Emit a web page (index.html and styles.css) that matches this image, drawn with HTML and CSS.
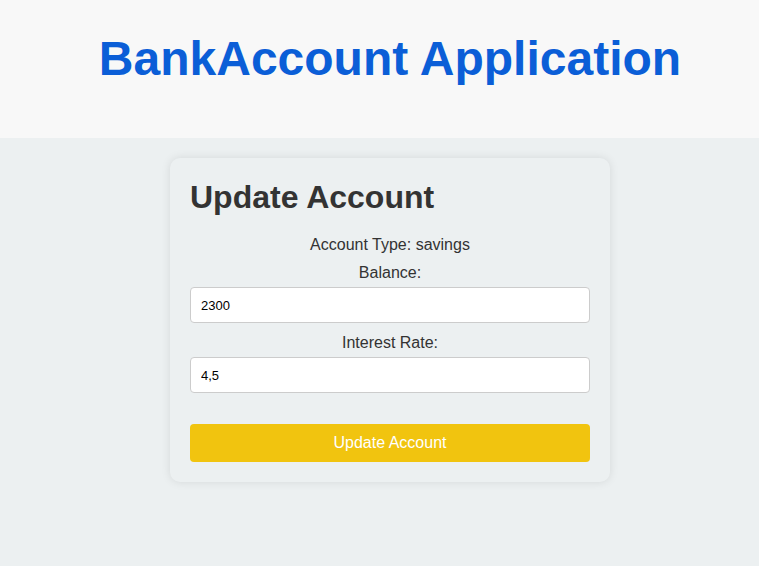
FILE: index.html
```html
<!DOCTYPE html>
<html>
<head>
<meta charset="utf-8">
<link rel="stylesheet" href="styles.css">
</head>
<body>
<header class="header">
  <h1 class="title">BankAccount Application</h1>
</header>
<main class="main">
  <section class="card">
    <h2 class="card-title">Update Account</h2>
    <p class="type">Account Type: savings</p>
    <label class="label" for="bal">Balance:</label>
    <input class="field" id="bal" type="text" value="2300">
    <label class="label" for="rate">Interest Rate:</label>
    <input class="field" id="rate" type="text" value="4,5">
    <button class="btn">Update Account</button>
  </section>
</main>
</body>
</html>
```
FILE: styles.css
```css
html, body {
  margin: 0;
  padding: 0;
}
body {
  background: #ecf0f1;
  font-family: "Liberation Sans", Arial, sans-serif;
  color: #333;
  height: 566px;
  overflow: hidden;
}
.header {
  background: #f8f8f8;
  height: 138px;
  padding-left: 21px;
  box-sizing: border-box;
  display: flex;
  justify-content: center;
}
.title {
  margin: 0;
  padding-top: 31px;
  font-size: 48px;
  font-weight: bold;
  color: #0b5ed7;
  line-height: 55px;
}
.main {
  padding-left: 21px;
  display: flex;
  justify-content: center;
  padding-top: 20px;
}
.card {
  width: 440px;
  box-sizing: border-box;
  padding: 21px 20px 20px;
  border-radius: 10px;
  background: #ecf0f1;
  box-shadow: 0 0 10px rgba(0, 0, 0, 0.1);
  display: flex;
  flex-direction: column;
  text-align: center;
}
.card-title {
  margin: 0 0 20px;
  font-size: 32px;
  line-height: 37px;
  text-align: left;
  color: #333;
}
.type {
  margin: 0 0 10px;
  font-size: 16px;
  line-height: 18px;
}
.label {
  display: block;
  font-size: 16px;
  line-height: 18px;
  margin-bottom: 5px;
}
.field {
  height: 36px;
  flex: 0 0 36px;
  box-sizing: border-box;
  border: 1px solid #ccc;
  border-radius: 4px;
  padding: 0 10px;
  font-family: "Liberation Sans", Arial, sans-serif;
  font-size: 13px;
  color: #000;
  background: #fff;
  margin: 0 0 11px;
}
.btn {
  margin-top: 20px;
  height: 38px;
  flex: 0 0 38px;
  border: none;
  border-radius: 4px;
  background: #f1c40f;
  color: #fff;
  font-family: "Liberation Sans", Arial, sans-serif;
  font-size: 16px;
}
```
